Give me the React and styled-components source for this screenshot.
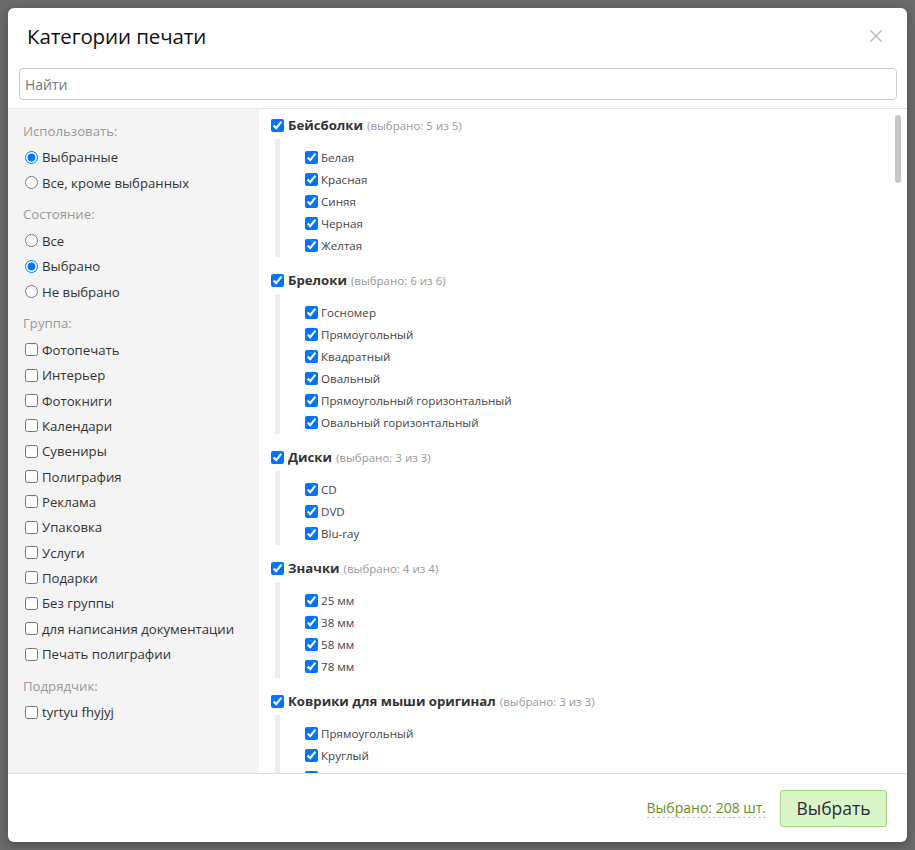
import React, { useState, useRef, useEffect } from 'react';
import styled, { createGlobalStyle } from 'styled-components';

const GlobalStyle = createGlobalStyle`
  html, body {
    margin: 0;
    background: #6b6b6b;
    font-family: "Open Sans", "Noto Sans", "DejaVu Sans", sans-serif;
  }
  * { box-sizing: border-box; }
`;

const Page = styled.div`
  padding: 8px;
  width: 915px;
  height: 850px;
`;

const Modal = styled.div`
  width: 899px;
  height: 834px;
  background: #fff;
  border-radius: 6px;
  display: flex;
  flex-direction: column;
  overflow: hidden;
  box-shadow: 0 3px 12px rgba(0, 0, 0, 0.3);
`;

const Header = styled.div`
  height: 56px;
  padding: 0 24px 0 19px;
  display: flex;
  align-items: center;
  justify-content: space-between;
`;

const Title = styled.h2`
  margin: 0;
  font-size: 20.5px;
  font-weight: 400;
  color: #111;
  letter-spacing: -0.1px;
`;

const CloseButton = styled.button`
  border: none;
  background: none;
  padding: 0;
  width: 14px;
  height: 14px;
  cursor: pointer;
  display: flex;
`;

const SearchRow = styled.div`
  padding: 4px 10px 8px 11px;
`;

const SearchInput = styled.input`
  width: 100%;
  height: 32px;
  border: 1px solid #ccc;
  border-radius: 4px;
  padding: 0 5px;
  font-family: inherit;
  font-size: 14px;
  color: #333;
  outline: none;

  &::placeholder {
    color: #777;
  }
`;

const Body = styled.div`
  flex: 1;
  min-height: 0;
  display: flex;
  border-top: 1px solid #e6e6e6;
`;

const Sidebar = styled.div`
  width: 251px;
  flex-shrink: 0;
  background: #f4f4f4;
  padding: 11.5px 0 0 15px;
`;

const SectionLabel = styled.div`
  color: #999;
  font-size: 13.2px;
  line-height: 20px;
  margin-top: 9px;

  &:first-child {
    margin-top: 0;
  }
`;

const OptionList = styled.div`
  margin-top: 4px;
  display: flex;
  flex-direction: column;
`;

const Option = styled.label`
  display: flex;
  align-items: center;
  height: 25.35px;
  font-size: 13.2px;
  color: #333;
  cursor: pointer;

  input {
    width: 13px;
    height: 13px;
    margin: 0 4px 0 2px;
  }
`;

const ListArea = styled.div`
  flex: 1;
  min-width: 0;
  position: relative;
  display: flex;
`;

const List = styled.div`
  flex: 1;
  overflow-y: scroll;
  padding: 6px 0 0 12px;
  scrollbar-width: none;

  &::-webkit-scrollbar {
    display: none;
  }
`;

const ScrollThumb = styled.div`
  position: absolute;
  right: 6px;
  width: 6px;
  border-radius: 3px;
  background: #c8c8c8;
  pointer-events: none;
`;

const Group = styled.div`
  margin-bottom: 13.5px;
`;

const GroupHeader = styled.label`
  display: flex;
  align-items: center;
  height: 20px;
  cursor: pointer;

  input {
    width: 13px;
    height: 13px;
    margin: 0 4px 0 0;
  }
`;

const GroupTitle = styled.span`
  font-weight: 700;
  font-size: 13.2px;
  color: #333;
`;

const GroupCount = styled.span`
  font-size: 11.5px;
  color: #999;
  margin-left: 4px;
`;

const SubList = styled.div`
  margin: 4px 0 0 4px;
  border-left: 5px solid #eee;
  padding: 7.5px 0 0 25px;
`;

const SubItem = styled.label`
  display: flex;
  align-items: center;
  height: 22px;
  font-size: 11.6px;
  color: #444;
  cursor: pointer;

  input {
    width: 13px;
    height: 13px;
    margin: 0 3px 0 0;
  }
`;

const Footer = styled.div`
  height: 69px;
  flex-shrink: 0;
  border-top: 1px solid #ddd;
  display: flex;
  align-items: center;
  justify-content: flex-end;
  gap: 14px;
  padding-right: 20px;
`;

const Counter = styled.span`
  font-size: 14px;
  color: #6b8e23;
  line-height: 19px;
  border-bottom: 1px dashed #b9d18f;
  cursor: pointer;
`;

const SubmitButton = styled.button`
  width: 107px;
  height: 37px;
  background: #d9f6c6;
  border: 1px solid #a3d486;
  border-radius: 3px;
  font-family: inherit;
  font-size: 17.5px;
  color: #2b2b3b;
  cursor: pointer;
`;

const COLORS = ['Белый', 'Черный', 'Красный', 'Синий', 'Зеленый', 'Желтый'];
const SIZES = ['10×15', '15×21', '20×30', '30×40', '40×50', '50×70'];
const FORMATS = ['A6', 'A5', 'A4', 'A3'];
const SHAPES = ['Круглый', 'Квадратный', 'Прямоугольный', 'Овальный', 'Сердце', 'Фигурный'];

const EXTRA_NAMES = [
  'Кружки', 'Магниты', 'Пазлы', 'Подушки', 'Футболки мужские', 'Футболки женские',
  'Футболки детские', 'Холсты', 'Часы настенные', 'Чехлы для телефонов', 'Тарелки',
  'Сумки', 'Кепки', 'Визитки', 'Листовки', 'Буклеты', 'Наклейки', 'Календари настольные',
  'Календари настенные', 'Открытки', 'Плакаты', 'Фоторамки', 'Шары', 'Ручки', 'Флешки',
  'Зонты', 'Полотенца', 'Фартуки', 'Термокружки', 'Бутылки', 'Пледы', 'Брелоки акриловые',
  'Значки закатные', 'Коврики для мыши',
];

const SETS = [COLORS, SIZES, FORMATS, SHAPES];

const groups = [
  { name: 'Бейсболки', items: ['Белая', 'Красная', 'Синяя', 'Черная', 'Желтая'] },
  {
    name: 'Брелоки',
    items: ['Госномер', 'Прямоугольный', 'Квадратный', 'Овальный', 'Прямоугольный горизонтальный', 'Овальный горизонтальный'],
  },
  { name: 'Диски', items: ['CD', 'DVD', 'Blu-ray'] },
  { name: 'Значки', items: ['25 мм', '38 мм', '58 мм', '78 мм'] },
  { name: 'Коврики для мыши оригинал', items: ['Прямоугольный', 'Круглый', 'Фигурный'] },
  ...EXTRA_NAMES.map((name, i) => ({ name, items: SETS[i % SETS.length] })),
];

const groupOptions = [
  'Фотопечать', 'Интерьер', 'Фотокниги', 'Календари', 'Сувениры', 'Полиграфия', 'Реклама',
  'Упаковка', 'Услуги', 'Подарки', 'Без группы', 'для написания документации', 'Печать полиграфии',
];

const CloseIcon = () => (
  <svg width="14" height="14" viewBox="0 0 14 14">
    <path d="M1.5 1.5 L12.5 12.5 M12.5 1.5 L1.5 12.5" stroke="#bdbdbd" strokeWidth="1.6" fill="none" />
  </svg>
);

// thumb of the list's scrollbar, from the scroll position
const useThumb = (ref) => {
  const [thumb, setThumb] = useState({ top: 6, height: 69 });

  const update = () => {
    const el = ref.current;
    if (!el) return;
    const track = el.clientHeight - 12;
    const height = Math.max(30, (track * el.clientHeight) / el.scrollHeight);
    const max = el.scrollHeight - el.clientHeight;
    const top = 6 + (max > 0 ? (el.scrollTop / max) * (track - height) : 0);
    setThumb({ top, height });
  };

  useEffect(update, []);
  return [thumb, update];
};

export default function App() {
  const [query, setQuery] = useState('');
  const [use, setUse] = useState('selected');
  const [state, setState] = useState('checked');
  const listRef = useRef(null);
  const [thumb, onScroll] = useThumb(listRef);

  return (
    <>
      <GlobalStyle />
      <Page>
        <Modal>
          <Header>
            <Title>Категории печати</Title>
            <CloseButton aria-label="Закрыть">
              <CloseIcon />
            </CloseButton>
          </Header>
          <SearchRow>
            <SearchInput
              placeholder="Найти"
              value={query}
              onChange={(e) => setQuery(e.target.value)}
            />
          </SearchRow>
          <Body>
            <Sidebar>
              <SectionLabel>Использовать:</SectionLabel>
              <OptionList>
                <Option>
                  <input type="radio" name="use" checked={use === 'selected'} onChange={() => setUse('selected')} />
                  Выбранные
                </Option>
                <Option>
                  <input type="radio" name="use" checked={use === 'except'} onChange={() => setUse('except')} />
                  Все, кроме выбранных
                </Option>
              </OptionList>

              <SectionLabel>Состояние:</SectionLabel>
              <OptionList>
                <Option>
                  <input type="radio" name="state" checked={state === 'all'} onChange={() => setState('all')} />
                  Все
                </Option>
                <Option>
                  <input type="radio" name="state" checked={state === 'checked'} onChange={() => setState('checked')} />
                  Выбрано
                </Option>
                <Option>
                  <input type="radio" name="state" checked={state === 'unchecked'} onChange={() => setState('unchecked')} />
                  Не выбрано
                </Option>
              </OptionList>

              <SectionLabel>Группа:</SectionLabel>
              <OptionList>
                {groupOptions.map((g) => (
                  <Option key={g}>
                    <input type="checkbox" />
                    {g}
                  </Option>
                ))}
              </OptionList>

              <SectionLabel>Подрядчик:</SectionLabel>
              <OptionList>
                <Option>
                  <input type="checkbox" />
                  tyrtyu fhyjyj
                </Option>
              </OptionList>
            </Sidebar>

            <ListArea>
              <List ref={listRef} onScroll={onScroll}>
                {groups.map((g) => (
                  <Group key={g.name}>
                    <GroupHeader>
                      <input type="checkbox" defaultChecked />
                      <GroupTitle>{g.name}</GroupTitle>
                      <GroupCount>
                        (выбрано: {g.items.length} из {g.items.length})
                      </GroupCount>
                    </GroupHeader>
                    <SubList>
                      {g.items.map((item) => (
                        <SubItem key={item}>
                          <input type="checkbox" defaultChecked />
                          {item}
                        </SubItem>
                      ))}
                    </SubList>
                  </Group>
                ))}
              </List>
              <ScrollThumb style={{ top: thumb.top, height: thumb.height }} />
            </ListArea>
          </Body>
          <Footer>
            <Counter>Выбрано: 208 шт.</Counter>
            <SubmitButton>Выбрать</SubmitButton>
          </Footer>
        </Modal>
      </Page>
    </>
  );
}
